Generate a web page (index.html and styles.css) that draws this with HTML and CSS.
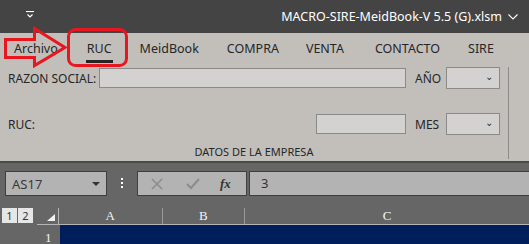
FILE: index.html
```html
<!DOCTYPE html>
<html lang="es">
<head>
<meta charset="UTF-8">
<meta name="viewport" content="width=device-width, initial-scale=1.0">
<title>MACRO-SIRE-MeidBook</title>
<link rel="stylesheet" href="styles.css">
</head>
<body>
<div class="window">
    <!-- barra de titulo -->
    <div class="titlebar">
        <svg class="qat" width="8" height="7" viewBox="0 0 8 7">
            <path d="M0 0.5H8" stroke="#fff" stroke-width="1.2"/>
            <path d="M1.5 3.5L4 6L6.5 3.5" stroke="#fff" stroke-width="1.2" fill="none"/>
        </svg>
        <div class="title">MACRO-SIRE-MeidBook-V 5.5 (G).xlsm
            <svg class="title-arrow" width="10" height="6" viewBox="0 0 10 6">
                <path d="M0.5 0.5L5 5L9.5 0.5" stroke="#fff" stroke-width="1.1" fill="none"/>
            </svg>
        </div>
    </div>

    <!-- cinta de opciones -->
    <div class="ribbon">
        <div class="tabs">
            <div class="tab first"><span>Archivo</span></div>
            <div class="tab active"><span>RUC</span></div>
            <div class="tab"><span>MeidBook</span></div>
            <div class="tab compra"><span>COMPRA</span></div>
            <div class="tab venta"><span>VENTA</span></div>
            <div class="tab"><span>CONTACTO</span></div>
            <div class="tab"><span>SIRE</span></div>
        </div>
        <div class="ribbon-body">
            <div class="group">
                <div class="row">
                    <label class="lbl lbl-razon">RAZON SOCIAL:</label>
                    <div class="box box-razon"></div>
                    <label class="lbl lbl-side">AÑO</label>
                    <div class="combo"><span class="chev">&#8964;</span></div>
                </div>
                <div class="row row2">
                    <label class="lbl lbl-ruc">RUC:</label>
                    <div class="box box-ruc"></div>
                    <label class="lbl lbl-side">MES</label>
                    <div class="combo"><span class="chev">&#8964;</span></div>
                </div>
                <div class="caption">DATOS DE LA EMPRESA</div>
            </div>
        </div>
    </div>

    <!-- barra de formulas -->
    <div class="formula-area">
        <div class="namebox">
            <span>AS17</span>
            <span class="tri"></span>
        </div>
        <div class="dots"><i></i><i></i><i></i></div>
        <div class="fxbox">
            <svg width="12" height="12" viewBox="0 0 12 12"><path d="M1 1L11 11M11 1L1 11" stroke="#8c8c8c" stroke-width="1.6"/></svg>
            <svg width="14" height="12" viewBox="0 0 14 12"><path d="M1 6L5 10L13 1" stroke="#8c8c8c" stroke-width="2" fill="none"/></svg>
            <span class="fx">fx</span>
        </div>
        <div class="formula-input">3</div>
    </div>

    <!-- hoja -->
    <div class="sheet">
        <div class="head-row">
            <div class="levels"><span>1</span><span>2</span></div>
            <div class="corner"><span class="corner-tri"></span></div>
            <div class="col col-a">A</div>
            <div class="col col-b">B</div>
            <div class="col col-c">C</div>
        </div>
        <div class="data-row">
            <div class="rowhead">1</div>
            <div class="cells"></div>
        </div>
    </div>

    <!-- marcas rojas sobre la captura -->
    <svg class="marks" width="140" height="75" viewBox="0 0 140 75">
        <path d="M5.5 39.5H34.5V28.5L65 47.5L34.5 65.5V57.5H5.5Z" fill="none" stroke="#e8161e" stroke-width="3" stroke-linejoin="miter"/>
        <rect x="68.5" y="29.5" width="58" height="36" rx="7" fill="none" stroke="#e8161e" stroke-width="3"/>
    </svg>
</div>
</body>
</html>
```

FILE: styles.css
```css
body {
    margin: 0;
    padding: 0;
    font-family: "Noto Sans", sans-serif;
    background: #666666;
}
.window {
    position: relative;
    width: 529px;
    height: 244px;
    overflow: hidden;
}

/* barra de titulo */
.titlebar {
    height: 33px;
    background: #444444;
    display: flex;
    align-items: center;
    color: #ffffff;
}
.qat {
    margin-left: 26px;
    margin-top: -5px;
}
.title {
    margin-left: auto;
    margin-right: 11px;
    font-size: 12.5px;
    display: flex;
    align-items: center;
    gap: 6px;
}

/* cinta */
.ribbon {
    background: #c2bfbb;
    border-bottom: 2px solid #4a4a4a;
}
.tabs {
    display: flex;
    height: 30px;
    padding-left: 14px;
    gap: 28px;
    font-size: 12.5px;
    color: #262626;
}
.tab {
    padding-top: 7px;
}
.tab span {
    display: inline-block;
    line-height: 16px;
}
.tab.first {
    margin-right: 1px;
}
.tab.compra {
    margin-right: -1px;
}
.tab.venta {
    margin-right: 3px;
}
.tab.active span {
    border-bottom: 3px solid #262626;
    padding: 0 1px 3px;
    margin: 0 -1px;
}
.ribbon-body {
    height: 98px;
    display: flex;
}
.group {
    width: 500px;
    padding-left: 8px;
    margin-top: 4px;
    display: flex;
    flex-direction: column;
    border-right: 1px solid #8e8c8a;
    height: 92px;
}
.row {
    display: flex;
    align-items: center;
    height: 22px;
}
.row2 {
    margin-top: 24px;
}
.lbl {
    font-size: 12px;
    color: #262626;
}
.lbl-razon {
    width: 91px;
}
.lbl-ruc {
    width: 308px;
}
.lbl-side {
    width: 31px;
    margin-left: 9px;
}
.box {
    height: 18px;
    background: #d3d2d0;
    border: 1px solid #8a8a8a;
}
.box-razon {
    width: 305px;
}
.box-ruc {
    width: 88px;
}
.combo {
    width: 52px;
    height: 20px;
    background: #d3d2d0;
    border: 1px solid #8a8a8a;
    display: flex;
    justify-content: flex-end;
    align-items: center;
}
.chev {
    font-size: 10px;
    line-height: 10px;
    color: #333;
    margin-right: 6px;
    margin-top: -4px;
}
.caption {
    margin-top: 10px;
    line-height: 14px;
    font-size: 11px;
    color: #262626;
    text-align: center;
    padding-right: 8px;
}

/* barra de formulas */
.formula-area {
    height: 44px;
    display: flex;
    align-items: flex-start;
    padding-top: 8px;
    box-sizing: border-box;
}
.namebox {
    margin-left: 5px;
    height: 23px;
    background: #b3b3b3;
    border: 1px solid #3e3e3e;
    display: flex;
    align-items: center;
    justify-content: space-between;
    padding: 0 6px;
    width: 88px;
    font-size: 13px;
    color: #3a3a3a;
}
.tri {
    width: 0;
    height: 0;
    border-left: 4px solid transparent;
    border-right: 4px solid transparent;
    border-top: 4px solid #333;
}
.dots {
    width: 30px;
    display: flex;
    flex-direction: column;
    align-items: center;
    gap: 2px;
    padding-top: 7px;
}
.dots i {
    width: 2px;
    height: 2px;
    background: #ffffff;
}
.fxbox {
    height: 23px;
    background: #b3b3b3;
    border: 1px solid #3e3e3e;
    display: flex;
    align-items: center;
    padding-left: 13px;
    width: 95px;
    gap: 23px;
}
.fx {
    font-family: "Liberation Serif", serif;
    font-style: italic;
    font-weight: bold;
    font-size: 13px;
    color: #333;
    margin-left: -3px;
}
.formula-input {
    flex: 1;
    margin-left: 2px;
    height: 23px;
    background: #b3b3b3;
    border-top: 1px solid #3e3e3e;
    border-bottom: 1px solid #3e3e3e;
    border-left: 1px solid #3e3e3e;
    padding-left: 11px;
    font-size: 13px;
    line-height: 23px;
    color: #333;
}

/* hoja */
.sheet {
    padding-top: 1px;
}
.head-row {
    display: flex;
    height: 16px;
    border-bottom: 1px solid #b5b5b5;
    margin-left: 37px;
}
.levels {
    display: flex;
    gap: 1px;
    margin-left: -35px;
    width: 35px;
}
.levels span {
    width: 15px;
    height: 15px;
    background: #e6e6e6;
    font-size: 11px;
    line-height: 15px;
    text-align: center;
    color: #333;
}
.corner {
    width: 22px;
    border-right: 1px solid #b5b5b5;
    display: flex;
    align-items: flex-end;
    justify-content: flex-end;
}
.corner-tri {
    width: 0;
    height: 0;
    border-left: 8px solid transparent;
    border-bottom: 7px solid #f2f2f2;
    margin: 0 3px 3px 0;
}
.col {
    font-family: "Liberation Serif", serif;
    font-size: 13px;
    line-height: 16px;
    color: #f4f4f4;
    text-align: center;
    border-right: 1px solid #9a9a9a;
}
.col-a {
    width: 105px;
}
.col-b {
    width: 83px;
}
.col-c {
    width: 290px;
    border-right: none;
}
.data-row {
    display: flex;
    height: 22px;
}
.rowhead {
    width: 60px;
    padding-left: 45px;
    box-sizing: border-box;
    font-family: "Liberation Serif", serif;
    font-size: 13px;
    line-height: 26px;
    color: #f4f4f4;
}
.cells {
    flex: 1;
    background: #001e5b;
}

/* anotaciones */
.marks {
    position: absolute;
    left: 0;
    top: 0;
}
```
